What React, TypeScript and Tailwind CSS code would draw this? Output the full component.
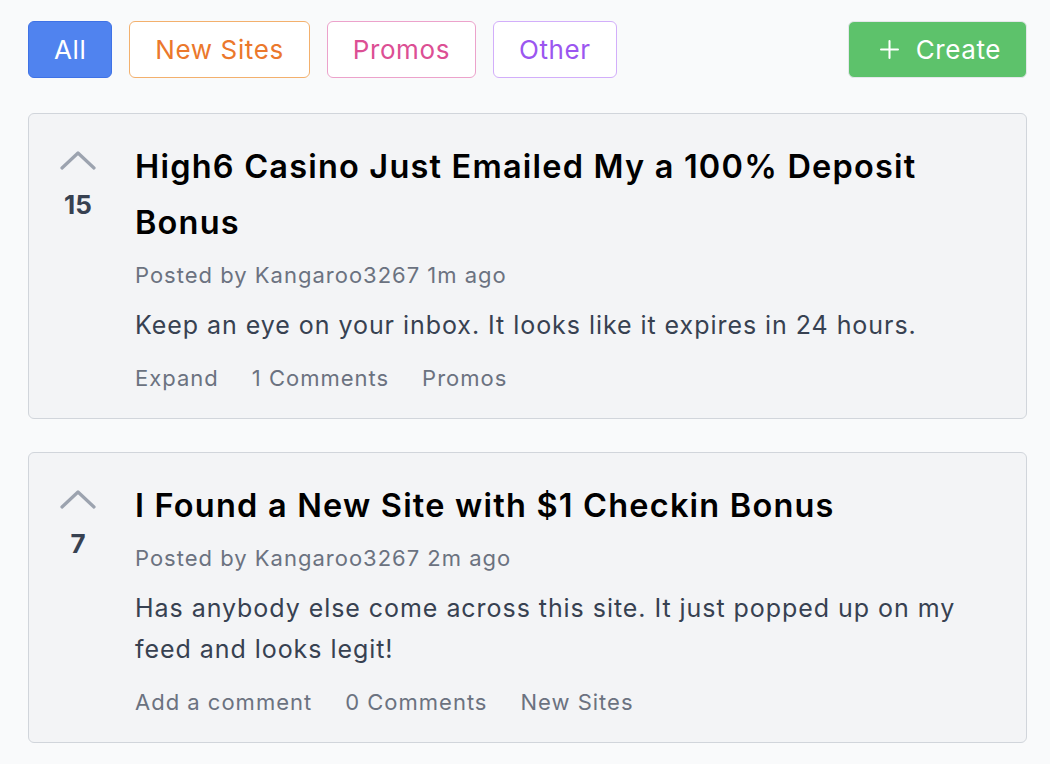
import { Plus } from 'lucide-react';

const filters = [
  { label: 'All', className: 'border-[#3f72e6] bg-[#5083ef] text-white' },
  { label: 'New Sites', className: 'border-[#f3b06d] bg-white text-[#eb782c]' },
  { label: 'Promos', className: 'border-[#eca2cb] bg-white text-[#dc4f94]' },
  { label: 'Other', className: 'border-[#d2aefa] bg-white text-[#9b56f0]' },
];

const posts = [
  {
    votes: 15,
    title: 'High6 Casino Just Emailed My a 100% Deposit Bonus',
    meta: 'Posted by Kangaroo3267 1m ago',
    body: 'Keep an eye on your inbox. It looks like it expires in 24 hours.',
    actions: ['Expand', '1 Comments', 'Promos'],
  },
  {
    votes: 7,
    title: 'I Found a New Site with $1 Checkin Bonus',
    meta: 'Posted by Kangaroo3267 2m ago',
    body: 'Has anybody else come across this site. It just popped up on my feed and looks legit!',
    actions: ['Add a comment', '0 Comments', 'New Sites'],
  },
];

function Chevron() {
  return (
    <svg width="36" height="20" viewBox="0 0 36 20" fill="none" className="text-[#9ca3af]">
      <polyline points="2,18 18,3 34,18" stroke="currentColor" strokeWidth="3.2" strokeLinecap="round" strokeLinejoin="round" />
    </svg>
  );
}

export default function App() {
  return (
    <div className="min-h-screen bg-[#f9fafb] pl-[28px] pr-[23px] pt-[21px] pb-[20px] font-['Inter','Liberation_Sans',sans-serif]">
      <div className="flex items-center justify-between">
        <div className="flex gap-[17px]">
          {filters.map((f) => (
            <button
              key={f.label}
              className={`h-[57px] rounded-[6px] border-[1.5px] px-[25px] text-[26px] tracking-[0.6px] ${f.className}`}
            >
              {f.label}
            </button>
          ))}
        </div>
        <button className="flex h-[57px] items-center gap-[12px] rounded-[6px] border border-[#e5e7eb] bg-[#5dc26b] pl-[26px] pr-[25px] text-[26px] tracking-[0.6px] text-white">
          <Plus size={29} strokeWidth={1.7} />
          Create
        </button>
      </div>

      <div className="mt-[35px] flex flex-col gap-[33px]">
        {posts.map((p) => (
          <article
            key={p.title}
            className="flex gap-[36px] rounded-[6px] border border-[#d1d5db] bg-[#f3f4f6] pl-[28px] pr-[24px] pt-[25px] pb-[24px]"
          >
            <div className="flex w-[42px] flex-none flex-col items-center pt-[11px]">
              <Chevron />
              <div className="mt-[20px] text-[26px] font-bold leading-[30px] text-[#374151]">{p.votes}</div>
            </div>
            <div className="min-w-0 flex-1">
              <h2 className="text-[32.5px] font-semibold leading-[56px] tracking-[1.2px] text-black">{p.title}</h2>
              <p className="mt-[8px] text-[22px] leading-[32px] tracking-[1px] text-[#6b7280]">{p.meta}</p>
              <p className="mt-[14px] text-[25px] leading-[41px] tracking-[0.95px] text-[#374151]">{p.body}</p>
              <div className="mt-[16px] flex gap-[33px] text-[22px] leading-[32px] tracking-[1px] text-[#6b7280]">
                {p.actions.map((a) => (
                  <span key={a}>{a}</span>
                ))}
              </div>
            </div>
          </article>
        ))}
      </div>
    </div>
  );
}
